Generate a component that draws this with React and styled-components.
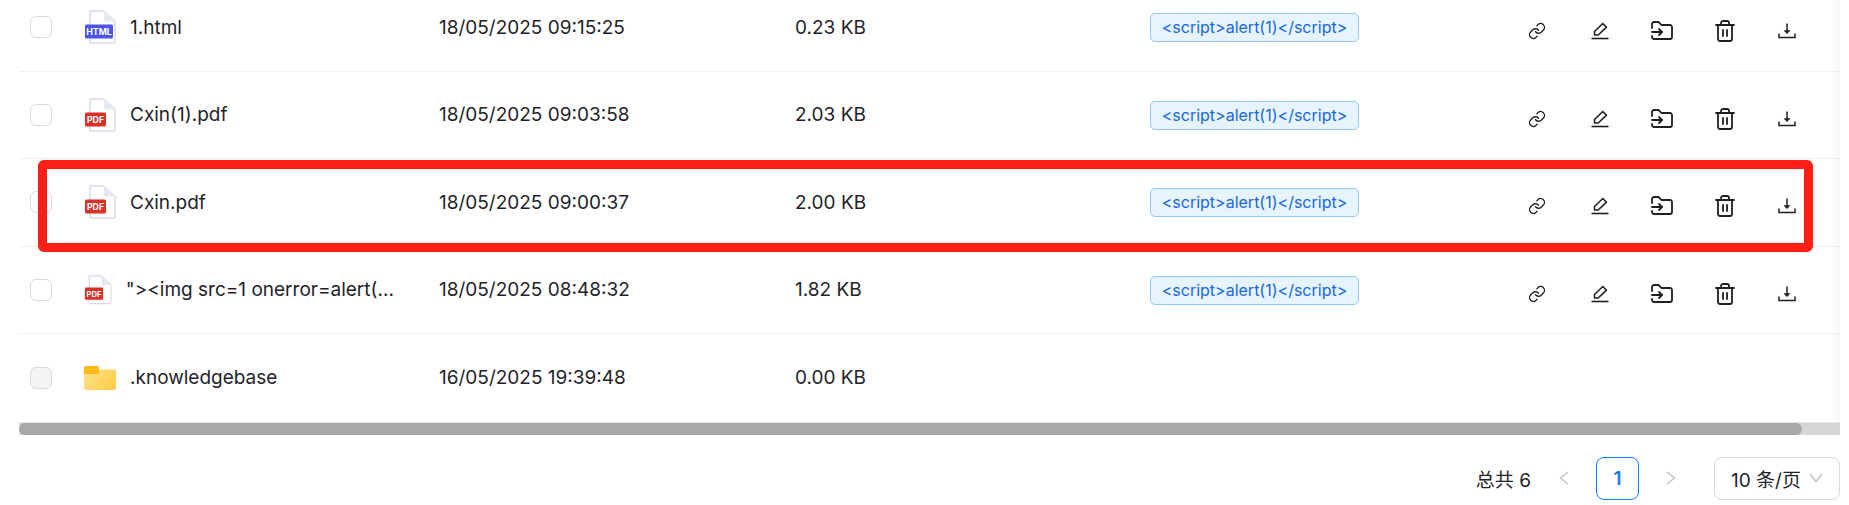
import React from 'react'
import styled, { createGlobalStyle } from 'styled-components'
import { Link, FolderInput, Trash2 } from 'lucide-react'

const Global = createGlobalStyle`
  html, body { margin: 0; padding: 0; background: #fff; }
  body { font-family: Inter, "Noto Sans CJK SC", sans-serif; color: #1f2329; }
`

const Page = styled.div`
  position: relative;
  width: 1849px;
  height: 505px;
  overflow: hidden;
`

const Table = styled.div`
  width: 1821px;
  margin: -16px 0 0 19px;
`

const Row = styled.div`
  display: grid;
  grid-template-columns: 65px 355px 356px 355px 356px 1fr;
  align-items: center;
  height: 87.5px;
  box-sizing: border-box;
  border-bottom: ${p => (p.$last ? 'none' : '1px solid #eef0f3')};
  font-size: 19px;
`

const Check = styled.span`
  display: block;
  width: 22px;
  height: 22px;
  margin-left: 11px;
  box-sizing: border-box;
  border: 1px solid #d9dbe0;
  border-radius: 6px;
  background: ${p => (p.$disabled ? '#f4f4f4' : '#fff')};
`

const NameCell = styled.div`
  display: flex;
  align-items: center;
  gap: 14px;
`

const IconBox = styled.span`
  display: flex;
  flex: none;
`

const Tag = styled.span`
  display: inline-block;
  box-sizing: border-box;
  height: 29px;
  width: 209px;
  margin-top: 1px;
  line-height: 27px;
  text-align: center;
  font-size: 16px;
  color: #1668dc;
  background: #e6f4ff;
  border: 1px solid #91caff;
  border-radius: 5px;
`

const Actions = styled.div`
  display: flex;
  margin-top: 8px;
`

const ActionBtn = styled.span`
  width: 62.5px;
  height: 24px;
  display: flex;
  justify-content: center;
  align-items: center;
  color: #1f1f1f;
`

const ScrollShade = styled.div`
  position: absolute;
  left: 1830px;
  top: 0;
  width: 10px;
  height: 421px;
  background: linear-gradient(to right, rgba(0, 0, 0, 0), rgba(0, 0, 0, 0.035));
`

const Track = styled.div`
  width: 1821px;
  height: 13px;
  margin-left: 19px;
  background: #d6d6d6;
  border-top: 1px solid #e4e4e4;
  box-sizing: border-box;
`

const Thumb = styled.div`
  width: 1783px;
  height: 12px;
  background: #a8a8a8;
  border-radius: 6px;
`

const Pager = styled.div`
  display: flex;
  align-items: center;
  justify-content: flex-end;
  width: 1840px;
  height: 43px;
  margin-top: 22px;
  font-size: 19px;
`

const Total = styled.span`
  margin-right: 23px;
`

const PageArrow = styled.span`
  display: flex;
  justify-content: center;
  width: 20px;
  color: #c4c4c4;
`

const PageNum = styled.span`
  width: 43px;
  height: 43px;
  box-sizing: border-box;
  margin: 0 22px;
  border: 1px solid #1677ff;
  border-radius: 8px;
  color: #1677ff;
  font-weight: 600;
  line-height: 41px;
  text-align: center;
`

const SizeSelect = styled.span`
  display: flex;
  align-items: center;
  justify-content: space-between;
  width: 126px;
  height: 43px;
  box-sizing: border-box;
  margin-left: 33px;
  padding: 0 16px 0 16px;
  border: 1px solid #d9d9d9;
  border-radius: 8px;
  color: #c4c4c4;
`

const SizeText = styled.span`
  color: #1f2329;
`

const Frame = styled.div`
  position: absolute;
  left: 38px;
  top: 160px;
  width: 1775px;
  height: 92px;
  box-sizing: border-box;
  border: 9px solid #ff2015;
  border-radius: 6px;
  pointer-events: none;
`

const FileIcon = ({ label, color, scale = 1 }) => {
  const badgeW = label === 'HTML' ? 28 : 21
  return (
    <svg width={32 * scale} height={34 * scale} viewBox="0 0 32 34">
      <path
        d="M6 1h13.500L31 11.500v19.500a2 2 0 0 1-2 2H8a2 2 0 0 1-2-2z"
        fill="#fff"
        stroke="#d5dae6"
        strokeWidth="1.4"
      />
      <path d="M20 1v8.500a2 2 0 0 0 2 2h9z" fill="#e6e9f1" />
      <rect x="1" y="14.500" width={badgeW} height="14" rx="1.500" fill={color} />
      <text
        x={1 + badgeW / 2}
        y="24.800"
        textAnchor="middle"
        fontFamily="Inter, sans-serif"
        fontSize="8.800"
        fontWeight="700"
        fill="#fff"
      >
        {label}
      </text>
    </svg>
  )
}

const FolderIcon = () => (
  <svg width="32" height="24" viewBox="0 0 32 24">
    <defs>
      <linearGradient id="folderFill" x1="0" y1="0" x2="1" y2="0.6">
        <stop offset="0" stopColor="#ffe28f" />
        <stop offset="1" stopColor="#ffcf4d" />
      </linearGradient>
    </defs>
    <path d="M2 0h11a2 2 0 0 1 2 2v6H0V2a2 2 0 0 1 2-2z" fill="#ffb915" />
    <rect x="0" y="3.500" width="32" height="20.500" rx="2" fill="url(#folderFill)" />
    <path d="M0 5.500a2 2 0 0 1 2-2h13V8H0z" fill="#ffb915" />
  </svg>
)

const PenIcon = () => (
  <svg width="18" height="18" viewBox="0 0 18 18" fill="none" stroke="currentColor" strokeWidth="1.6">
    <path d="M3.500 13V9.500L11.800 1.500 15.500 5.200 7.200 13z" strokeLinejoin="round" />
    <path d="M0.500 16.500h17" />
  </svg>
)

const DownloadIcon = () => (
  <svg width="18" height="16" viewBox="0 0 18 16" fill="none" stroke="currentColor" strokeWidth="1.5">
    <path d="M9 0.500v9" />
    <path d="M6 7.500l3 3.200 3-3.200z" fill="currentColor" strokeWidth="0.500" />
    <path d="M1 10.500v4h16v-4" />
  </svg>
)

const PagerChevron = ({ points, w, h }) => (
  <svg width={w} height={h} viewBox={`0 0 ${w} ${h}`} fill="none" stroke="currentColor" strokeWidth="1.5">
    <polyline points={points} />
  </svg>
)

const files = [
  { name: '1.html', date: '18/05/2025 09:15:25', size: '0.23 KB', type: 'html' },
  { name: 'Cxin(1).pdf', date: '18/05/2025 09:03:58', size: '2.03 KB', type: 'pdf' },
  { name: 'Cxin.pdf', date: '18/05/2025 09:00:37', size: '2.00 KB', type: 'pdf' },
  { name: '"><img src=1 onerror=alert(...', date: '18/05/2025 08:48:32', size: '1.82 KB', type: 'pdf', small: true },
  { name: '.knowledgebase', date: '16/05/2025 19:39:48', size: '0.00 KB', type: 'folder' },
]

const TypeIcon = ({ file }) => {
  if (file.type === 'folder') return <FolderIcon />
  if (file.type === 'html') return <FileIcon label="HTML" color="#4a55e8" />
  return <FileIcon label="PDF" color="#dc2f26" scale={file.small ? 0.87 : 1} />
}

export default function App() {
  return (
    <Page>
      <Global />
      <Table>
        {files.map((f, i) => (
          <Row key={f.name} $last={i === files.length - 1}>
            <Check $disabled={f.type === 'folder'} />
            <NameCell>
              <IconBox><TypeIcon file={f} /></IconBox>
              <span>{f.name}</span>
            </NameCell>
            <span>{f.date}</span>
            <span>{f.size}</span>
            {f.type !== 'folder' ? <Tag>{'<script>alert(1)</script>'}</Tag> : <span />}
            {f.type !== 'folder' ? (
              <Actions>
                <ActionBtn><Link size={18} strokeWidth={1.8} /></ActionBtn>
                <ActionBtn><PenIcon /></ActionBtn>
                <ActionBtn><FolderInput size={24} strokeWidth={1.8} /></ActionBtn>
                <ActionBtn><Trash2 size={24} strokeWidth={1.8} /></ActionBtn>
                <ActionBtn><DownloadIcon /></ActionBtn>
              </Actions>
            ) : <span />}
          </Row>
        ))}
      </Table>
      <ScrollShade />
      <Track><Thumb /></Track>
      <Pager>
        <Total>总共 6</Total>
        <PageArrow><PagerChevron w={10} h={14} points="9,1 1.500,7 9,13" /></PageArrow>
        <PageNum>1</PageNum>
        <PageArrow><PagerChevron w={10} h={14} points="1,1 8.500,7 1,13" /></PageArrow>
        <SizeSelect>
          <SizeText>10 条/页</SizeText>
          <PagerChevron w={14} h={10} points="1,1 7,8.500 13,1" />
        </SizeSelect>
      </Pager>
      <Frame />
    </Page>
  )
}
